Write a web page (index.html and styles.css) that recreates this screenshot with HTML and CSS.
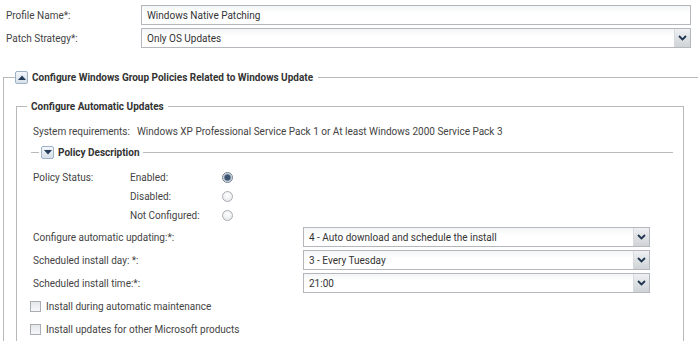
FILE: index.html
```html
<!DOCTYPE html>
<html lang="en">
<head>
    <meta charset="UTF-8">
    <title>Patch Profile</title>
    <link rel="stylesheet" href="styles.css">
</head>
<body>
    <div class="top">
        <div class="row">
            <label class="lbl">Profile Name*:</label>
            <input class="text-input" type="text" value="Windows Native Patching">
        </div>
        <div class="row">
            <label class="lbl">Patch Strategy*:</label>
            <div class="combo">
                <span class="combo-text">Only OS Updates</span>
                <span class="combo-btn"><svg width="9" height="6" viewBox="0 0 9 6"><path d="M1 1 L4.5 4.5 L8 1" fill="none" stroke="#1f3550" stroke-width="1.8"/></svg></span>
            </div>
        </div>
    </div>

    <fieldset class="group outer">
        <legend><span class="toggle"><svg width="8" height="5" viewBox="0 0 8 5"><path d="M0 5 L4 0.5 L8 5 Z" fill="#243c5a"/></svg></span>Configure Windows Group Policies Related to Windows Update</legend>

        <fieldset class="group inner">
            <legend class="plain">Configure Automatic Updates</legend>

            <div class="sysreq">
                <span class="sysreq-lbl">System requirements:</span>
                <span>Windows XP Professional Service Pack 1 or At least Windows 2000 Service Pack 3</span>
            </div>

            <div class="subhead">
                <span class="subhead-line short"></span>
                <span class="toggle"><svg width="8" height="5" viewBox="0 0 8 5"><path d="M0 0 L4 4.5 L8 0 Z" fill="#243c5a"/></svg></span>
                <span class="subhead-title">Policy Description</span>
                <span class="subhead-line"></span>
            </div>

            <div class="status">
                <span class="status-lbl">Policy Status:</span>
                <span class="opt">Enabled:</span>
                <span class="radio checked"></span>
                <span></span>
                <span class="opt">Disabled:</span>
                <span class="radio"></span>
                <span></span>
                <span class="opt">Not Configured:</span>
                <span class="radio"></span>
            </div>

            <div class="settings">
                <div class="set-row">
                    <span class="set-lbl">Configure automatic updating:*:</span>
                    <div class="combo">
                        <span class="combo-text">4 - Auto download and schedule the install</span>
                        <span class="combo-btn"><svg width="9" height="6" viewBox="0 0 9 6"><path d="M1 1 L4.5 4.5 L8 1" fill="none" stroke="#1f3550" stroke-width="1.8"/></svg></span>
                    </div>
                </div>
                <div class="set-row">
                    <span class="set-lbl">Scheduled install day: *:</span>
                    <div class="combo">
                        <span class="combo-text">3 - Every Tuesday</span>
                        <span class="combo-btn"><svg width="9" height="6" viewBox="0 0 9 6"><path d="M1 1 L4.5 4.5 L8 1" fill="none" stroke="#1f3550" stroke-width="1.8"/></svg></span>
                    </div>
                </div>
                <div class="set-row">
                    <span class="set-lbl">Scheduled install time:*:</span>
                    <div class="combo">
                        <span class="combo-text">21:00</span>
                        <span class="combo-btn"><svg width="9" height="6" viewBox="0 0 9 6"><path d="M1 1 L4.5 4.5 L8 1" fill="none" stroke="#1f3550" stroke-width="1.8"/></svg></span>
                    </div>
                </div>
            </div>

            <div class="checks">
                <div class="check-row"><span class="check"></span>Install during automatic maintenance</div>
                <div class="check-row"><span class="check"></span>Install updates for other Microsoft products</div>
            </div>
        </fieldset>
    </fieldset>
</body>
</html>
```

FILE: styles.css
```css
* {
    margin: 0;
    padding: 0;
    box-sizing: border-box;
}

body {
    width: 698px;
    height: 341px;
    overflow: hidden;
    background: #fff;
    color: #444;
    font-family: 'Roboto', 'Liberation Sans', sans-serif;
    font-size: 10px;
}

.top {
    display: flex;
    flex-direction: column;
    gap: 3px;
    padding: 5px 7px 0 6px;
}

.row {
    display: flex;
    align-items: center;
    height: 20px;
}

.lbl {
    width: 135px;
    flex-shrink: 0;
}

.text-input {
    flex: 1;
    height: 20px;
    border: 1px solid #b4b8bc;
    background: linear-gradient(#f4f5f6, #fff 40%);
    font: inherit;
    color: #333;
    padding: 0 5px;
    outline: none;
}

/* dropdowns */
.combo {
    flex: 1;
    display: flex;
    align-items: stretch;
    height: 20px;
    border: 1px solid #b4b8bc;
    background: linear-gradient(#f4f5f6, #fff 40%);
}

.combo-text {
    flex: 1;
    display: flex;
    align-items: center;
    padding: 0 5px;
    color: #333;
}

.combo-btn {
    width: 16px;
    display: flex;
    align-items: center;
    justify-content: center;
    background: linear-gradient(#eef0f2, #cfd3d7);
    border-left: 1px solid #d8dbde;
}

/* group boxes */
.group {
    border: 1px solid #b9b9b9;
    border-bottom: none;
}

.group legend {
    display: flex;
    align-items: center;
    height: 14px;
    font-weight: bold;
    color: #333;
}

.outer {
    margin: 22px 0 0 3px;
    border-right: none;
    padding: 0 14px 0 12px;
}

.outer > legend {
    margin-left: -1px;
    padding: 0 5px 0 0;
}

.inner {
    margin-top: 15px;
    padding: 0 10px 0 16px;
    height: 242px;
}

.inner > legend.plain {
    margin-left: -6px;
    padding: 0 4px;
}

.toggle {
    width: 13px;
    height: 13px;
    display: inline-flex;
    align-items: center;
    justify-content: center;
    border: 1px solid #9fb2c6;
    border-radius: 2px;
    background: linear-gradient(#f2f6fa, #d6e0ea);
    margin-right: 4px;
}

.sysreq {
    display: flex;
    align-items: center;
    height: 16px;
    margin-top: 10px;
}

.sysreq-lbl {
    width: 104px;
}

.subhead {
    display: flex;
    align-items: center;
    height: 14px;
    margin: 6px 0 0 -2px;
}

.subhead-line {
    flex: 1;
    height: 1px;
    background: #b9b9b9;
    margin-left: 3px;
}

.subhead-line.short {
    flex: none;
    width: 8px;
    margin: 0 2px 0 0;
}

.subhead-title {
    font-weight: bold;
    color: #333;
}

.status {
    display: grid;
    grid-template-columns: 97px 92px 11px;
    grid-auto-rows: 19px;
    align-items: center;
    margin-top: 9px;
}

.radio {
    width: 11px;
    height: 11px;
    border-radius: 50%;
    border: 1px solid #a9adb2;
    background: radial-gradient(circle at 50% 35%, #fff, #e2e4e6);
}

.radio.checked {
    border-color: #6f7d8c;
    background: radial-gradient(circle, #3d5470 0, #3d5470 2.5px, #9fb0c2 3.5px, #eef1f4 4.5px);
}

.settings {
    display: flex;
    flex-direction: column;
    gap: 3px;
    margin-top: 2px;
}

.set-row {
    display: flex;
    align-items: center;
    height: 20px;
    width: 617px;
}

.set-lbl {
    width: 270px;
    flex-shrink: 0;
}

.checks {
    display: flex;
    flex-direction: column;
    gap: 5px;
    margin-top: 4px;
}

.check-row {
    display: flex;
    align-items: center;
    height: 18px;
    margin-left: -3px;
}

.check {
    width: 11px;
    height: 11px;
    border: 1px solid #a9adb2;
    background: linear-gradient(#e4e6e8, #f6f7f8);
    margin-right: 5px;
}
```
